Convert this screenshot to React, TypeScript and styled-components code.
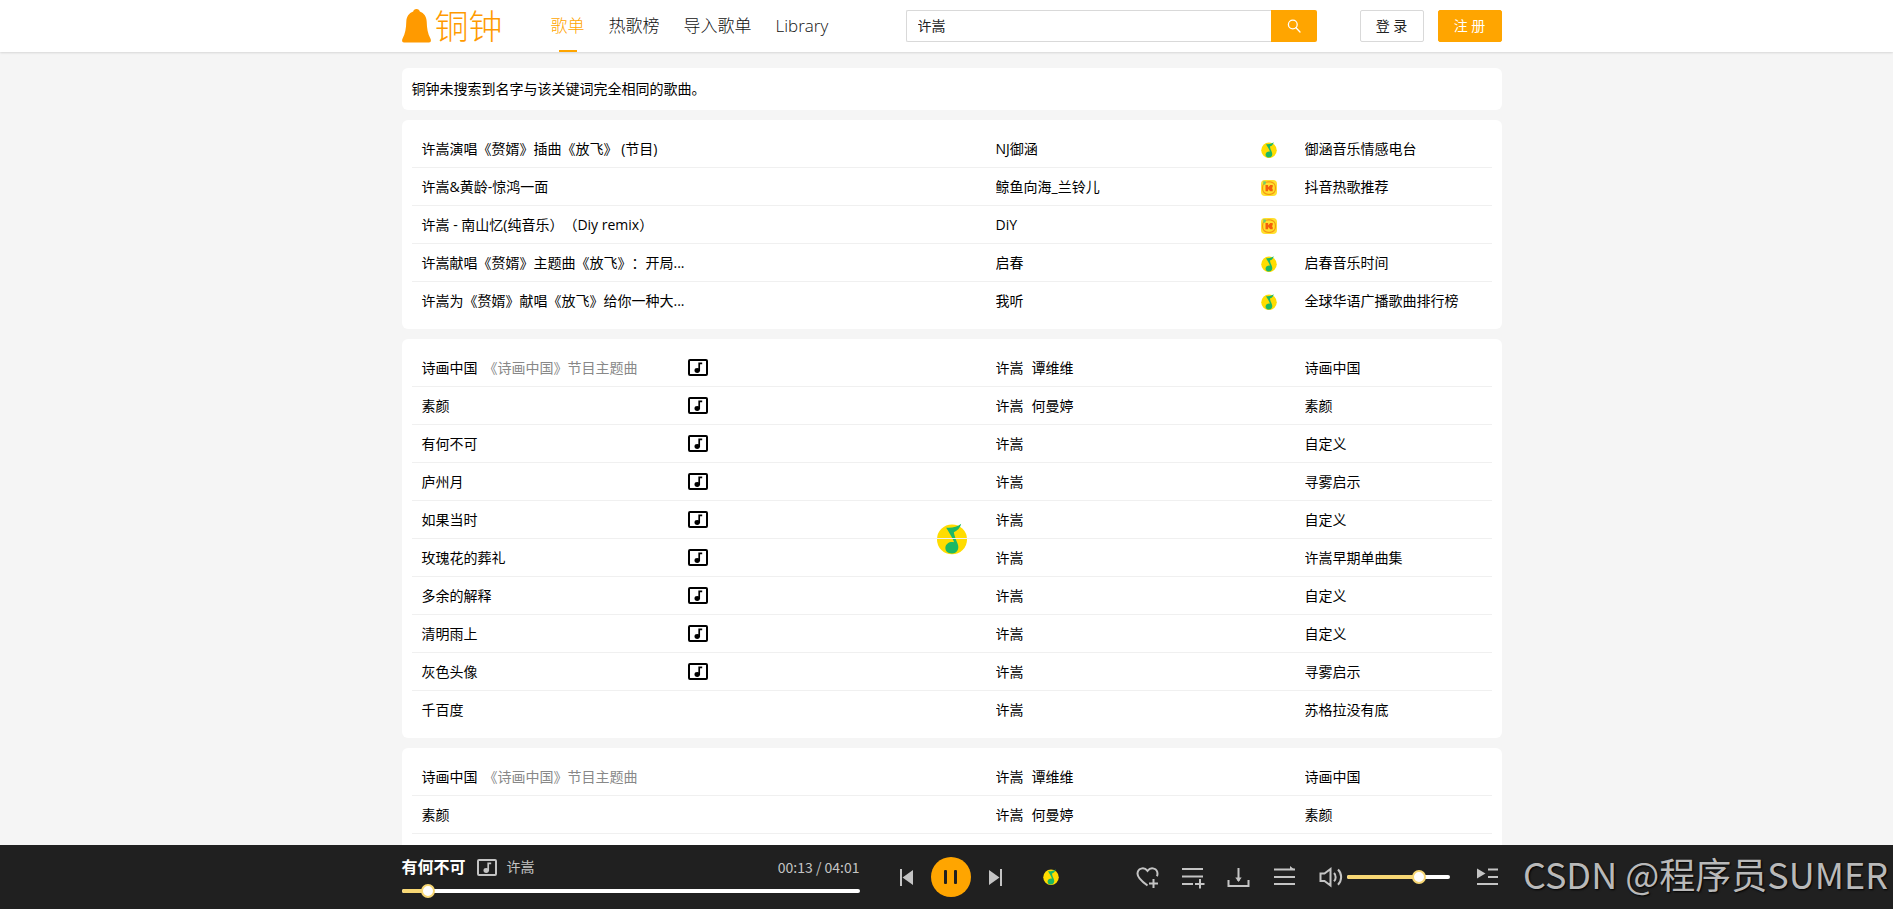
import React, { useState } from 'react';
import styled, { createGlobalStyle } from 'styled-components';

const ORANGE = '#ffa500';
const FONT = "'Open Sans', 'Noto Sans CJK SC', sans-serif";

const GlobalStyle = createGlobalStyle`
  *, *::before, *::after { box-sizing: border-box; }
  body {
    margin: 0;
    background: #f5f5f5;
    color: #000;
    font: 400 14px/22px ${FONT};
    text-spacing-trim: space-all;
  }
  button, input { font: inherit; color: inherit; }
  button { cursor: pointer; padding: 0; }
  svg { display: block; }
`;

const Page = styled.div`
  display: flex;
  flex-direction: column;
  height: 100vh;
`;

const Container = styled.div`
  width: 100%;
  max-width: 1110px;
  margin: 0 auto;
  padding-left: 10px;
`;

const Header = styled.header`
  flex: none;
  height: 52px;
  background: #fff;
  box-shadow: 0 1px 2px rgba(0, 0, 0, 0.12);
  z-index: 1;
`;

const HeaderRow = styled(Container)`
  display: flex;
  align-items: center;
  height: 52px;
`;

const Logo = styled.a`
  display: flex;
  align-items: center;
  gap: 4px;
  width: 149px;
  color: #ff9a00;
  font-size: 34px;
  font-weight: 300;
  line-height: 52px;
  text-decoration: none;
`;

const Nav = styled.nav`
  display: flex;
  gap: 24px;
  flex: 1;
  font-weight: 300;
`;

const NavLink = styled.a<{ $active?: boolean }>`
  display: flex;
  flex-direction: column;
  align-items: center;
  font-size: 17px;
  line-height: 52px;
  height: 52px;
  text-decoration: none;
  color: ${(p) => (p.$active ? ORANGE : '#111')};
  &::after {
    content: '';
    flex: none;
    width: 18px;
    height: 2px;
    margin-top: -2px;
    background: ${(p) => (p.$active ? ORANGE : 'transparent')};
  }
`;

const SearchForm = styled.form`
  display: flex;
  width: 411px;
  height: 32px;
  margin-right: 43px;
`;

const SearchInput = styled.input`
  flex: 1;
  min-width: 0;
  padding: 0 11px;
  border: 1px solid #d9d9d9;
  border-right: 0;
  border-radius: 2px 0 0 2px;
  outline: none;
  color: #222;
`;

const SearchButton = styled.button`
  display: flex;
  align-items: center;
  justify-content: center;
  width: 46px;
  border: 0;
  border-radius: 0 2px 2px 0;
  background: ${ORANGE};
  color: #fff;
`;

const AuthGroup = styled.div`
  display: flex;
  gap: 14px;
`;

const AuthButton = styled.button<{ $primary?: boolean }>`
  width: 64px;
  height: 32px;
  border: 1px solid ${(p) => (p.$primary ? ORANGE : '#d9d9d9')};
  border-radius: 2px;
  background: ${(p) => (p.$primary ? ORANGE : '#fff')};
  color: ${(p) => (p.$primary ? '#fff' : '#222')};
`;

const Main = styled.main`
  flex: 1;
  min-height: 0;
  overflow-y: auto;
  scrollbar-width: none;
`;

const CardStack = styled(Container)`
  display: flex;
  flex-direction: column;
  gap: 10px;
  padding-top: 16px;
`;

const Card = styled.section<{ $open?: boolean }>`
  position: relative;
  padding: 10px 10px ${(p) => (p.$open ? 48 : 10)}px;
  background: #fff;
  border-radius: 6px;
`;

const SongTable = styled.table`
  position: relative;
  z-index: 1;
  width: 100%;
  table-layout: fixed;
  border-spacing: 0;
`;

const Cell = styled.td<{ $last?: boolean }>`
  height: ${(p) => (p.$last ? 37 : 38)}px;
  padding: 0;
  border-bottom: ${(p) => (p.$last ? '0' : '1px solid #f0f0f0')};
  white-space: nowrap;
  overflow: hidden;
  text-overflow: ellipsis;
`;

const TitleCell = styled(Cell)`
  padding-left: 10px;
`;

const SourceCell = styled(Cell)`
  padding-top: 2px;
`;

const TitleCol = styled.col`
  width: 276px;
`;

const ArtistCol = styled.col`
  width: 265px;
`;

const SourceCol = styled.col`
  width: 44px;
`;

const AlbumCol = styled.col`
  width: 187px;
`;

const Subtitle = styled.span`
  margin-left: 6px;
  color: #888;
`;

const Artist = styled.span`
  margin-right: 8px;
`;

const Notice = styled.p`
  margin: 0;
`;

const FloatingSource = styled.div`
  position: absolute;
  top: 50%;
  left: 50%;
  transform: translate(-50%, -50%);
`;

const Player = styled.footer`
  position: relative;
  flex: none;
  height: 64px;
  background: #202020;
  color: #c4c4c4;
`;

const PlayerRow = styled(Container)`
  display: flex;
  align-items: center;
  height: 64px;
`;

const NowPlaying = styled.div`
  display: flex;
  flex-direction: column;
  width: 458px;
  height: 64px;
  padding-top: 11px;
`;

const TrackInfo = styled.div`
  display: flex;
  align-items: center;
  height: 22px;
`;

const TrackTitle = styled.strong`
  font-size: 16px;
  font-weight: 700;
  color: #fff;
  margin-right: 11px;
`;

const TrackArtist = styled.span`
  flex: 1;
  margin-left: 10px;
`;

const TrackTime = styled.span`
  font-family: 'Noto Sans CJK SC', sans-serif;
`;

const SliderBox = styled.div<{ $width?: number }>`
  display: grid;
  align-items: center;
  height: 14px;
  width: ${(p) => (p.$width ? `${p.$width}px` : '100%')};
  & > * { grid-area: 1 / 1; }
`;

const ProgressSlot = styled.div`
  margin-top: 6px;
`;

const Rail = styled.div`
  height: 4px;
  border-radius: 2px;
  background: #fff;
`;

const Fill = styled.div`
  height: 4px;
  border-radius: 2px;
  background: #f7d774;
`;

const Range = styled.input`
  appearance: none;
  width: calc(100% + 14px);
  height: 14px;
  margin: 0 -7px;
  background: transparent;
  z-index: 1;
  cursor: pointer;
  &::-webkit-slider-thumb {
    appearance: none;
    width: 14px;
    height: 14px;
    border: 2px solid #f7d774;
    border-radius: 50%;
    background: #fff;
  }
`;

const Transport = styled.div`
  display: flex;
  align-items: center;
  gap: 18px;
  margin-left: 40px;
  width: 143px;
`;

const IconButton = styled.button`
  display: flex;
  align-items: center;
  justify-content: center;
  border: 0;
  background: none;
  color: #c4c4c4;
`;

const PlayButton = styled(IconButton)`
  width: 40px;
  height: 40px;
  border-radius: 50%;
  background: ${ORANGE};
  color: #202020;
`;

const Tools = styled.div`
  display: flex;
  align-items: center;
  gap: 22px;
  margin-left: 76px;
`;

const Volume = styled.div`
  display: flex;
  align-items: center;
  gap: 4px;
  margin-right: 4px;
`;

const Watermark = styled.div`
  position: absolute;
  right: 5px;
  top: 0;
  color: #b9b9b9;
  font: 400 36px/56px 'Noto Sans CJK SC', sans-serif;
  text-shadow: 1px 1px 2px #000;
  white-space: nowrap;
`;

const BellIcon = () => (
  <svg width="29" height="34" viewBox="0 0 29 34" fill="currentColor" aria-hidden="true">
    <path d="M14.5 0c-1.900 0-3 1-3.300 2.600C6.800 4.200 4.500 8 4.300 12.500 4.100 19.500 3.300 24.500.6 29.500c-.9 1.900-.7 4 1.400 4h25c2.100 0 2.300-2.100 1.400-4-2.700-5-3.500-10-3.700-17-.2-4.500-2.500-8.300-6.900-9.900C17.500 1 16.400 0 14.500 0Z" />
  </svg>
);

const SearchIcon = () => (
  <svg width="14" height="14" viewBox="0 0 14 14" fill="none" stroke="currentColor" strokeWidth="1.3" strokeLinecap="round" aria-hidden="true">
    <circle cx="5.8" cy="5.5" r="4.4" />
    <path d="M9 8.8l4 4.200" />
  </svg>
);

const MvIcon = () => (
  <svg width="20" height="17" viewBox="0 0 20 17" fill="none" stroke="currentColor" aria-hidden="true">
    <rect x="1" y="1" width="18" height="15" rx="1" strokeWidth="2" />
    <path d="M11.200 12V4.300h3" strokeWidth="1.700" />
    <ellipse cx="9.200" cy="11.500" rx="2.700" ry="2.400" fill="currentColor" stroke="none" />
  </svg>
);

const QqIcon = ({ size = 16 }: { size?: number }) => (
  <svg width={size} height={size} viewBox="0 0 32 32" role="img" aria-label="QQ">
    <circle cx="16" cy="16.500" r="15.500" fill="#ffdc00" />
    <path d="M10 4.300C15.500 5 21.500 3.600 25.500.3c-.9 4.200-3.900 7.200-7.600 8.800.5 3.600 2.300 7.900 3.800 11.500 2.400 5.400-.6 10.400-5.700 10.400-4.400 0-7.400-2.900-6.800-6.700.7-3.800 4.600-6.100 9-5C16.400 14.700 13.200 9.400 10 4.300Z" fill="#1cb865" />
  </svg>
);

const KuwoIcon = () => (
  <svg width="16" height="16" viewBox="0 0 16 16" fill="none" role="img" aria-label="Kuwo">
    <rect width="16" height="16" rx="4" fill="#ffe02e" />
    <rect x="1.600" y="1.800" width="12.800" height="12.600" rx="5.500" stroke="#f59a12" strokeWidth="1.200" />
    <path d="M4.500 5h2.600v2.200L9.300 5h2.400v2.200L10.800 8l.9 1v2.200H9.300L7.100 9v2.200H4.500Z" fill="#f4600c" />
    <path d="M2.200 1.200l2.800.2-.6 3-2 .4Z" fill="#6fcf6a" />
  </svg>
);

const PrevIcon = () => (
  <svg width="13" height="17" viewBox="0 0 13 17" fill="currentColor" aria-hidden="true">
    <path d="M0 0h2v17H0ZM13 1v15L2.500 8.500Z" />
  </svg>
);

const NextIcon = () => (
  <svg width="13" height="17" viewBox="0 0 13 17" fill="currentColor" aria-hidden="true">
    <path d="M11 0h2v17h-2ZM0 1v15l10.500-7.500Z" />
  </svg>
);

const PauseIcon = () => (
  <svg width="14" height="14" viewBox="0 0 14 14" fill="currentColor" aria-hidden="true">
    <rect x="0" width="3" height="14" rx="1" />
    <rect x="10" width="3" height="14" rx="1" />
  </svg>
);

const ToolIcon = ({ children }: { children: React.ReactNode }) => (
  <svg width="24" height="24" viewBox="0 0 24 24" fill="none" stroke="currentColor" strokeWidth="2" aria-hidden="true">
    {children}
  </svg>
);

type Source = 'qq' | 'kuwo';

interface Song {
  title: string;
  subtitle?: string;
  mv?: boolean;
  artists: string[];
  source?: Source;
  album?: string;
}

const related: Song[] = [
  { title: '许嵩演唱《赘婿》插曲《放飞》 (节目)', artists: ['NJ御涵'], source: 'qq', album: '御涵音乐情感电台' },
  { title: '许嵩&黄龄-惊鸿一面', artists: ['鲸鱼向海_兰铃儿'], source: 'kuwo', album: '抖音热歌推荐' },
  { title: '许嵩 - 南山忆(纯音乐）（Diy remix）', artists: ['DiY'], source: 'kuwo' },
  { title: '许嵩献唱《赘婿》主题曲《放飞》：开局...', artists: ['启春'], source: 'qq', album: '启春音乐时间' },
  { title: '许嵩为《赘婿》献唱《放飞》给你一种大...', artists: ['我听'], source: 'qq', album: '全球华语广播歌曲排行榜' },
];

const qqSongs: Song[] = [
  { title: '诗画中国', subtitle: '《诗画中国》节目主题曲', mv: true, artists: ['许嵩', '谭维维'], album: '诗画中国' },
  { title: '素颜', mv: true, artists: ['许嵩', '何曼婷'], album: '素颜' },
  { title: '有何不可', mv: true, artists: ['许嵩'], album: '自定义' },
  { title: '庐州月', mv: true, artists: ['许嵩'], album: '寻雾启示' },
  { title: '如果当时', mv: true, artists: ['许嵩'], album: '自定义' },
  { title: '玫瑰花的葬礼', mv: true, artists: ['许嵩'], album: '许嵩早期单曲集' },
  { title: '多余的解释', mv: true, artists: ['许嵩'], album: '自定义' },
  { title: '清明雨上', mv: true, artists: ['许嵩'], album: '自定义' },
  { title: '灰色头像', mv: true, artists: ['许嵩'], album: '寻雾启示' },
  { title: '千百度', artists: ['许嵩'], album: '苏格拉没有底' },
];

const moreSongs: Song[] = [
  { title: '诗画中国', subtitle: '《诗画中国》节目主题曲', artists: ['许嵩', '谭维维'], album: '诗画中国' },
  { title: '素颜', artists: ['许嵩', '何曼婷'], album: '素颜' },
];

const SongList = ({ songs, open = false }: { songs: Song[]; open?: boolean }) => (
  <SongTable>
    <colgroup>
      <TitleCol />
      <col />
      <ArtistCol />
      <SourceCol />
      <AlbumCol />
    </colgroup>
    <tbody>
      {songs.map((song, index) => {
        const last = !open && index === songs.length - 1;
        return (
          <tr key={song.title}>
            <TitleCell $last={last}>
              {song.title}
              {song.subtitle && <Subtitle>{song.subtitle}</Subtitle>}
            </TitleCell>
            <Cell $last={last}>{song.mv && <MvIcon />}</Cell>
            <Cell $last={last}>
              {song.artists.map((artist) => (
                <Artist key={artist}>{artist}</Artist>
              ))}
            </Cell>
            <SourceCell $last={last}>
              {song.source === 'qq' && <QqIcon />}
              {song.source === 'kuwo' && <KuwoIcon />}
            </SourceCell>
            <Cell $last={last}>{song.album}</Cell>
          </tr>
        );
      })}
    </tbody>
  </SongTable>
);

interface SliderProps {
  label: string;
  max: number;
  value: number;
  width?: number;
  onChange: (value: number) => void;
}

const Slider = ({ label, max, value, width, onChange }: SliderProps) => (
  <SliderBox $width={width}>
    <Rail />
    <Fill style={{ width: `${(value / max) * 100}%` }} />
    <Range
      type="range"
      aria-label={label}
      min={0}
      max={max}
      step="any"
      value={value}
      onChange={(e) => onChange(Number(e.target.value))}
    />
  </SliderBox>
);

const clock = (s: number) =>
  `${String(Math.floor(s / 60)).padStart(2, '0')}:${String(Math.floor(s % 60)).padStart(2, '0')}`;

export default function App() {
  const [query, setQuery] = useState('许嵩');
  const [time, setTime] = useState(13.8);
  const [volume, setVolume] = useState(70);

  return (
    <Page>
      <GlobalStyle />
      <Header>
        <HeaderRow>
          <Logo href="#">
            <BellIcon />
            铜钟
          </Logo>
          <Nav>
            <NavLink href="#" $active>歌单</NavLink>
            <NavLink href="#">热歌榜</NavLink>
            <NavLink href="#">导入歌单</NavLink>
            <NavLink href="#">Library</NavLink>
          </Nav>
          <SearchForm onSubmit={(e) => e.preventDefault()}>
            <SearchInput aria-label="搜索" value={query} onChange={(e) => setQuery(e.target.value)} />
            <SearchButton type="submit" aria-label="搜索">
              <SearchIcon />
            </SearchButton>
          </SearchForm>
          <AuthGroup>
            <AuthButton type="button">登 录</AuthButton>
            <AuthButton type="button" $primary>注 册</AuthButton>
          </AuthGroup>
        </HeaderRow>
      </Header>

      <Main>
        <CardStack>
          <Card>
            <Notice>铜钟未搜索到名字与该关键词完全相同的歌曲。</Notice>
          </Card>
          <Card>
            <SongList songs={related} />
          </Card>
          <Card>
            <FloatingSource>
              <QqIcon size={31} />
            </FloatingSource>
            <SongList songs={qqSongs} />
          </Card>
          <Card $open>
            <SongList songs={moreSongs} open />
          </Card>
        </CardStack>
      </Main>

      <Player>
        <PlayerRow>
          <NowPlaying>
            <TrackInfo>
              <TrackTitle>有何不可</TrackTitle>
              <MvIcon />
              <TrackArtist>许嵩</TrackArtist>
              <TrackTime>{clock(time)} / {clock(241)}</TrackTime>
            </TrackInfo>
            <ProgressSlot>
              <Slider label="播放进度" max={241} value={time} onChange={setTime} />
            </ProgressSlot>
          </NowPlaying>
          <Transport>
            <IconButton type="button" aria-label="上一首"><PrevIcon /></IconButton>
            <PlayButton type="button" aria-label="暂停"><PauseIcon /></PlayButton>
            <IconButton type="button" aria-label="下一首"><NextIcon /></IconButton>
          </Transport>
          <QqIcon />
          <Tools>
            <IconButton type="button" aria-label="收藏">
              <ToolIcon>
                <path d="M12.500 20.500C9 18 2.500 13.500 2.500 8.800 2.500 3.200 9 1.500 12.500 5.800 16 1.500 22.500 3.200 22.500 8.800c0 1-.2 1.700-.6 2.500M18.500 14v9M14 18.500h9" />
              </ToolIcon>
            </IconButton>
            <IconButton type="button" aria-label="添加到歌单">
              <ToolIcon>
                <path d="M1 4h21M1 11.500h21M1 19h11M14 19h9.500M19 14v9.500" />
              </ToolIcon>
            </IconButton>
            <IconButton type="button" aria-label="下载">
              <ToolIcon>
                <path d="M1.500 15v6h20v-6M11.500 3v13" />
                <path d="M8.300 12.500h6.400L11.500 17Z" fill="currentColor" stroke="none" />
              </ToolIcon>
            </IconButton>
            <IconButton type="button" aria-label="播放顺序">
              <ToolIcon>
                <path d="M1 4.500h21M1 12h21M1 19h21" />
                <path d="M17 1l5 4h-5Z" fill="currentColor" stroke="none" />
              </ToolIcon>
            </IconButton>
            <Volume>
              <IconButton type="button" aria-label="静音">
                <ToolIcon>
                  <path d="M1.500 8.500h4L11.500 4v16.500L5.500 16h-4ZM15 8c2.200 2.300 2.200 6 0 8.300M19 4.500c4.200 4.200 4.200 11 0 15.200" />
                </ToolIcon>
              </IconButton>
              <Slider label="音量" max={100} value={volume} width={103} onChange={setVolume} />
            </Volume>
            <IconButton type="button" aria-label="播放列表">
              <ToolIcon>
                <path d="M12 4.500h10M12 12h10M1 19h21" />
                <path d="M1 3.500l8.500 5L1 13.500Z" fill="currentColor" stroke="none" />
              </ToolIcon>
            </IconButton>
          </Tools>
        </PlayerRow>
        <Watermark>CSDN @程序员SUMER</Watermark>
      </Player>
    </Page>
  );
}
